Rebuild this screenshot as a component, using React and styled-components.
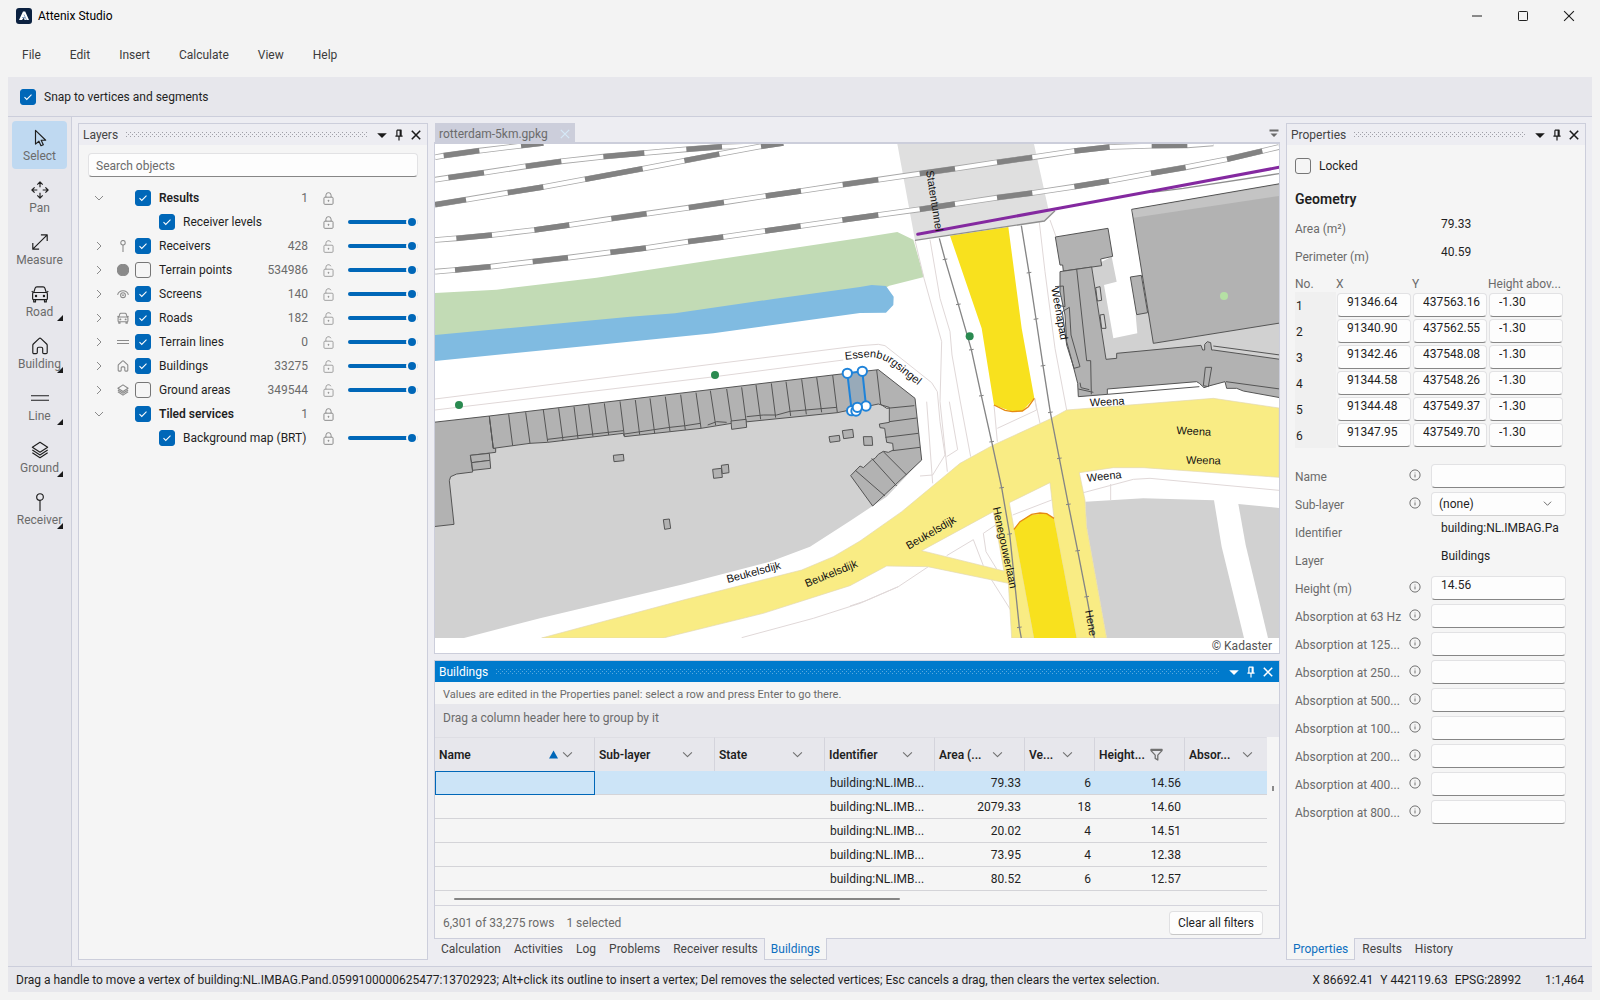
import React, { useState } from "react";
import styled, { createGlobalStyle, css } from "styled-components";

const colors = {
  window: "#f3f3f3",
  chrome: "#e7e7ec",
  workspace: "#ededf2",
  panel: "#f5f5f5",
  border: "#ccceDB",
  accent: "#0067b8",
  header: "#007acc",
  text: "#1f1f1f",
  muted: "#6b6b6b",
};

const GlobalStyle = createGlobalStyle`
  *, *::before, *::after {
    box-sizing: border-box;
  }
  body {
    margin: 0;
    background: ${colors.window};
    color: ${colors.text};
    font-family: Roboto, "Open Sans", sans-serif;
    font-size: 12px;
    line-height: 16px;
  }
  button, input, select {
    font: inherit;
    color: inherit;
    margin: 0;
  }
  button {
    background: none;
    border: 0;
    padding: 0;
  }
`;

/* ---------- icons ---------- */

const iconPaths = {
  select: <path d="M5 1.5v15.3l3.8-3.2 2.3 5 2.6-1.2-2.4-4.9h5z" />,
  pan: (
    <path d="M10 1v6M7 4l3-3 3 3M10 19v-6M7 16l3 3 3-3M1 10h6M4 7l-3 3 3 3M19 10h-6M16 7l3 3-3 3" />
  ),
  measure: <path d="M2 18 18 2M11 2h7v7M2 11v7h7" />,
  road: (
    <>
      <path d="M3 8.5 4.6 3.4A2 2 0 0 1 6.5 2h7a2 2 0 0 1 1.9 1.4L17 8.5M.8 7l2 1.5M19.2 7l-2 1.5" />
      <rect x="1.8" y="8.3" width="16.4" height="8" rx="1.4" />
      <path d="M3 16.5v2.3h2v-2.3M15 16.5v2.3h2v-2.3" />
      <circle cx="5.6" cy="12.3" r=".7" fill="currentColor" />
      <circle cx="14.4" cy="12.3" r=".7" fill="currentColor" />
    </>
  ),
  building: (
    <path d="M2 9.2c0-.6.2-1 .6-1.4l6.3-6a1.6 1.6 0 0 1 2.2 0l6.3 6c.4.4.6.8.6 1.4v8a1.3 1.3 0 0 1-1.3 1.3h-2.4a1.3 1.3 0 0 1-1.3-1.3V13a1.6 1.6 0 0 0-1.6-1.6H8.6A1.6 1.6 0 0 0 7 13v4.2a1.3 1.3 0 0 1-1.3 1.3H3.3A1.3 1.3 0 0 1 2 17.2z" />
  ),
  line: <path d="M0 7.5h20M0 12.5h20" />,
  ground: (
    <path d="M10 1.5 18.5 7 10 12.5 1.5 7zM1.5 10l8.5 5.5 8.5-5.5M1.5 13l8.5 5.5 8.5-5.5" />
  ),
  receiver: (
    <>
      <circle cx="10" cy="4.5" r="3.7" />
      <path d="M10 8.2V20" />
    </>
  ),
  point: <circle cx="10" cy="10" r="9.5" fill="currentColor" />,
  screen: (
    <>
      <path d="M1 11.5a9.3 9.3 0 0 1 18 0" />
      <circle cx="10" cy="12" r="4" />
      <circle cx="10" cy="12" r=".6" />
    </>
  ),
  right: <path d="m6 2 8 8-8 8" />,
  down: <path d="m2 6 8 8 8-8" />,
  lock: (
    <>
      <rect x="3" y="8" width="14" height="11" rx="1.5" />
      <path d="M6 8V5a4 4 0 0 1 8 0v3" />
      <circle cx="10" cy="13.5" r=".8" fill="currentColor" />
    </>
  ),
  unlock: (
    <>
      <rect x="3" y="8" width="14" height="11" rx="1.5" />
      <path d="M6 8V5a4 4 0 0 1 7.7-1.5" />
      <circle cx="10" cy="13.5" r=".8" fill="currentColor" />
    </>
  ),
  menu: <path d="M2 7h16l-8 8z" fill="currentColor" stroke="none" />,
  pin: (
    <path d="M6.5 2h7v10M6.5 2v10M12 2v10M4 12h12M10 12v7" strokeWidth="2" />
  ),
  close: <path d="m3 3 14 14M17 3 3 17" />,
  overflow: (
    <path d="M1 3h18v4H1zM3 11h14l-7 7z" fill="currentColor" stroke="none" />
  ),
  filter: <path d="M1.5 2h17v2L12 11v7.5L8 16v-5L1.5 4zM2 3.5h16" />,
  info: (
    <>
      <circle cx="10" cy="10" r="8.5" />
      <path d="M10 9v5M10 6v1.2" />
    </>
  ),
  minimize: <path d="M0 10h20" />,
  maximize: <rect x="1" y="1" width="18" height="18" rx="1.5" />,
  sortUp: <path d="M10 1 20 19H0z" fill="currentColor" stroke="none" />,
};

const IconSvg = styled.svg`
  display: block;
  flex: none;
  fill: none;
  stroke: currentColor;
  stroke-linejoin: round;
`;

const Icon = ({ name, size = 16, weight = 1.3 }) => (
  <IconSvg width={size} height={size} viewBox="0 0 20 20" strokeWidth={weight} aria-hidden="true">
    {iconPaths[name]}
  </IconSvg>
);

/* ---------- shared controls ---------- */

const tick =
  "url(\"data:image/svg+xml,%3Csvg xmlns='http://www.w3.org/2000/svg' viewBox='0 0 16 16'%3E%3Cpath d='m4 8.2 2.6 2.6L12 5.4' fill='none' stroke='white' stroke-width='1.2'/%3E%3C/svg%3E\")";

const CheckBox = styled.input.attrs({ type: "checkbox" })`
  appearance: none;
  flex: none;
  width: 16px;
  height: 16px;
  border: 1px solid #767676;
  border-radius: 3px;
  background: ${colors.panel};
  &:checked {
    border-color: ${colors.accent};
    background: ${colors.accent} ${tick};
  }
`;

const CheckLabel = styled.label`
  display: flex;
  align-items: center;
  gap: 8px;
`;

const fieldBox = css`
  width: 100%;
  height: 24px;
  border: 1px solid #e2e2e4;
  border-radius: 4px;
  background: #fdfdfd;
  color: ${colors.text};
  outline: none;
`;

const TextField = styled.input`
  ${fieldBox}
  border-bottom-color: #868686;
  padding: 0 0 7px 9px;
`;

const SearchField = styled(TextField)`
  padding: 1px 7px 0;
  &::placeholder {
    color: ${colors.muted};
    opacity: 1;
  }
`;

const SelectBox = styled.div`
  position: relative;
  color: #5c5c5c;
  svg {
    position: absolute;
    top: 7px;
    right: 14px;
    pointer-events: none;
  }
`;

const Select = styled.select`
  ${fieldBox}
  appearance: none;
  padding: 0 7px;
  border-bottom-color: #cfcfcf;
`;

/* ---------- window frame ---------- */

const Window = styled.div`
  display: flex;
  flex-direction: column;
  min-height: 100vh;
  padding: 0 8px 8px;
`;

const TitleBar = styled.header`
  display: flex;
  align-items: center;
  gap: 6px;
  height: 31px;
  padding-left: 8px;
`;

const AppName = styled.span`
  flex: 1;
  color: #000;
`;

const WindowButtons = styled.div`
  display: flex;
`;

const WindowButton = styled.button`
  display: grid;
  place-items: center;
  width: 46px;
  height: 30px;
`;

const MenuBar = styled.nav`
  display: flex;
  height: 46px;
`;

const MenuItem = styled.button`
  padding: 2px 15px 0 14px;
  color: #3b3b3b;
`;

const OptionsBar = styled.div`
  display: flex;
  align-items: center;
  height: 40px;
  padding-left: 12px;
  background: ${colors.chrome};
  border-bottom: 1px solid ${colors.border};
`;

const Body = styled.div`
  flex: 1;
  display: flex;
  min-height: 0;
  background: ${colors.workspace};
`;

const ToolRail = styled.div`
  display: flex;
  flex-direction: column;
  gap: 4px;
  width: 64px;
  padding: 4px;
  background: ${colors.chrome};
  border-right: 1px solid ${colors.border};
`;

const ToolButton = styled.button`
  position: relative;
  display: flex;
  flex-direction: column;
  align-items: center;
  gap: 1px;
  width: 55px;
  height: 48px;
  padding-top: 8px;
  border-radius: 4px;
  background: ${({ $active }) => ($active ? "#bfd9f1" : "transparent")};
  span {
    color: ${colors.muted};
  }
`;

// small corner mark on tools that open a flyout
const FlyoutMark = styled.i`
  position: absolute;
  right: 4px;
  bottom: 4px;
  border: 3px solid #1a1a1a;
  border-top-color: transparent;
  border-left-color: transparent;
`;

const Workspace = styled.main`
  flex: 1;
  display: flex;
  gap: 6px;
  min-width: 0;
  padding: 6px;
`;

const StatusBar = styled.footer`
  display: flex;
  align-items: center;
  gap: 24px;
  height: 26px;
  padding: 0 8px;
  background: ${colors.chrome};
  border-top: 1px solid ${colors.border};
  white-space: nowrap;
`;

const StatusText = styled.span`
  flex: 1;
`;

const Coordinates = styled.span`
  display: flex;
  gap: 7px;
`;

/* ---------- dock panels ---------- */

const Dock = styled.section`
  display: flex;
  flex-direction: column;
  flex: ${({ $width }) => ($width ? `0 0 ${$width}px` : "1")};
  min-width: 0;
`;

const Panel = styled.div`
  display: flex;
  flex-direction: column;
  flex: ${({ $fit }) => ($fit ? "none" : "1")};
  min-height: 0;
  background: ${colors.panel};
  border: 1px solid ${colors.border};
`;

const PanelHeader = styled.div`
  display: flex;
  align-items: center;
  gap: 8px;
  height: 21px;
  padding: 0 5px 0 4px;
  color: ${({ $active }) => ($active ? "#fff" : "#444")};
  background: ${({ $active }) => ($active ? colors.header : colors.workspace)};
  button {
    color: ${({ $active }) => ($active ? "#fff" : "#1a1a1a")};
  }
`;

const Grip = styled.div`
  flex: 1;
  height: 6px;
  --dot: ${({ $active }) => ($active ? "#59a8de" : "#a0a0a8")};
  background-image: radial-gradient(circle at 0.5px 0.5px, var(--dot) 0.6px, transparent 0.7px),
    radial-gradient(circle at 2.5px 2.5px, var(--dot) 0.6px, transparent 0.7px);
  background-size: 4px 4px;
`;

const HeaderButtons = styled.div`
  display: flex;
  gap: 5px;
`;

const PanelTitle = ({ title, active }) => (
  <PanelHeader $active={active}>
    <span>{title}</span>
    <Grip $active={active} />
    <HeaderButtons>
      <button aria-label={`${title} options`}><Icon name="menu" size={12} /></button>
      <button aria-label={`Pin ${title}`}><Icon name="pin" size={12} /></button>
      <button aria-label={`Close ${title}`}><Icon name="close" size={12} weight={2.6} /></button>
    </HeaderButtons>
  </PanelHeader>
);

const TabStrip = styled.div`
  display: flex;
  height: 21px;
`;

const Tab = styled.button`
  padding: 0 6px 1px 7px;
  white-space: nowrap;
  color: #444;
  ${({ $active }) =>
    $active &&
    css`
      margin-top: -1px;
      padding: 1px 6px 0;
      color: #0e70c0;
      background: ${colors.panel};
      border: 1px solid ${colors.border};
      border-top: 0;
    `}
`;

/* ---------- layers ---------- */

const LayerBody = styled.div`
  padding: 8px 9px;
`;

const LayerList = styled.ul`
  list-style: none;
  margin: 9px 0 0;
  padding: 0;
`;

const LayerRow = styled.li`
  display: grid;
  grid-template-columns: 22px 25px 1fr auto 40px 70px;
  align-items: center;
  height: 24px;
  color: #8a8a8a;
  svg {
    justify-self: center;
  }
`;

const LayerName = styled(CheckLabel)`
  padding-left: ${({ $child }) => ($child ? "24px" : "0")};
  color: ${colors.text};
  font-weight: ${({ $group }) => ($group ? 600 : 400)};
  white-space: nowrap;
`;

const Count = styled.span`
  color: ${colors.muted};
`;

const Slider = styled.input.attrs({ type: "range" })`
  appearance: none;
  width: 70px;
  height: 16px;
  background: none;
  &::-webkit-slider-runnable-track {
    height: 4px;
    border-radius: 2px;
    background: ${colors.accent};
  }
  &::-webkit-slider-thumb {
    appearance: none;
    width: 12px;
    height: 12px;
    margin-top: -4px;
    margin-right: -2px;
    border: 2px solid ${colors.panel};
    border-radius: 50%;
    background: ${colors.accent};
  }
`;

const layers = [
  { name: "Results", count: 1, group: true, locked: true },
  { name: "Receiver levels", child: true, locked: true },
  { name: "Receivers", icon: "receiver", count: 428 },
  { name: "Terrain points", icon: "point", count: 534986, hidden: true },
  { name: "Screens", icon: "screen", count: 140 },
  { name: "Roads", icon: "road", count: 182 },
  { name: "Terrain lines", icon: "line", count: 0 },
  { name: "Buildings", icon: "building", count: 33275 },
  { name: "Ground areas", icon: "ground", count: 349544, hidden: true },
  { name: "Tiled services", count: 1, group: true, locked: true },
  { name: "Background map (BRT)", child: true, locked: true },
];

const LayersPanel = () => (
  <Dock $width={350}>
    <Panel>
      <PanelTitle title="Layers" />
      <LayerBody>
        <SearchField type="text" placeholder="Search objects" aria-label="Search objects" />
        <LayerList>
          {layers.map((layer) => (
            <LayerRow key={layer.name}>
              {layer.child ? <span /> : <Icon name={layer.group ? "down" : "right"} size={10} weight={2} />}
              {layer.icon ? <Icon name={layer.icon} size={12} weight={1.8} /> : <span />}
              <LayerName $child={layer.child} $group={layer.group}>
                <CheckBox defaultChecked={!layer.hidden} />
                {layer.name}
              </LayerName>
              <Count>{layer.count}</Count>
              <Icon name={layer.locked ? "lock" : "unlock"} size={13} weight={layer.locked ? 1.5 : 1.2} />
              {!layer.group && <Slider defaultValue={100} aria-label={`${layer.name} opacity`} />}
            </LayerRow>
          ))}
        </LayerList>
      </LayerBody>
    </Panel>
  </Dock>
);

/* ---------- map ---------- */

const DocumentTabs = styled.div`
  display: flex;
  justify-content: space-between;
  align-items: center;
  height: 21px;
  padding-right: 1px;
  border-bottom: 2px solid ${colors.border};
  color: #6b6b6b;
`;

const DocumentTab = styled.div`
  display: flex;
  align-items: center;
  align-self: stretch;
  gap: 11px;
  margin-left: 1px;
  padding: 2px 4px 0;
  background: ${colors.border};
  button {
    color: #d5e9f8;
  }
`;

const MapFrame = styled.div`
  flex: 1;
  display: flex;
  flex-direction: column;
  min-height: 300px;
  margin-bottom: 6px;
  background: #fff;
  border: 1px solid ${colors.border};
  border-top: 0;
`;

const MapSvg = styled.svg`
  display: block;
  flex: 1 1 0;
  width: 100%;
  min-height: 0;
  text {
    font-family: "Liberation Sans", Arial, sans-serif;
    font-size: 33px;
    fill: #111;
  }
`;

const Attribution = styled.div`
  height: 15px;
  padding-right: 7px;
  line-height: 17px;
  text-align: right;
  color: #555;
`;

// each list alternates open and filled stretches of track
const rails = [
  { points: [[15, 127], [41, 122], [148, 107], [273, 92], [340, 84]] },
  { points: [[15, 194], [55, 188], [162, 173], [287, 154], [394, 139], [520, 125], [643, 114], [769, 103], [876, 95], [975, 92]] },
  { filled: true, points: [[15, 269], [108, 254], [233, 233], [340, 216], [465, 193], [638, 161], [763, 137], [868, 117], [993, 94], [1060, 84]] },
  { points: [[15, 375], [79, 370], [186, 360], [313, 345], [418, 330], [544, 311], [650, 296], [776, 278], [882, 262], [1007, 243], [1113, 228], [1238, 209], [1345, 194], [1469, 176], [1575, 161], [1701, 142], [1807, 127], [1933, 108], [2039, 96], [2165, 92], [2272, 91], [2350, 85]] },
  { points: [[15, 470], [75, 465], [182, 455], [308, 440], [414, 428], [541, 412], [648, 399], [774, 380], [880, 366], [1005, 348], [1112, 333], [1237, 315], [1345, 300], [1469, 283], [1575, 267], [1701, 248], [1807, 234], [1933, 215], [2037, 198], [2163, 175], [2267, 157], [2391, 133], [2497, 108], [2547, 96]] },
];

const Rail = ({ points, filled }) => {
  const line = points.map((p) => p.join(",")).join(" ");
  const blocks = points
    .slice(0, -1)
    .map((p, i) => ((i % 2 === 0) === Boolean(filled) ? `M${p}L${points[i + 1]}` : ""))
    .join("");
  return (
    <g fill="none">
      <polyline points={line} stroke="#a8a8a8" strokeWidth="17" />
      <polyline points={line} stroke="#fff" strokeWidth="12" />
      <path d={blocks} stroke="#828282" strokeWidth="16" />
    </g>
  );
};

// party walls of the terrace, top end then bottom end
const walls = [
  [178, 905, 190, 1000], [236, 898, 248, 992], [287, 892, 300, 985], [340, 885, 353, 980],
  [386, 880, 399, 977], [432, 875, 444, 971], [476, 869, 489, 965], [523, 865, 536, 960],
  [570, 859, 583, 963], [616, 855, 629, 959], [660, 850, 674, 955], [706, 845, 720, 949],
  [752, 839, 766, 945], [798, 833, 813, 939], [841, 827, 857, 931], [890, 822, 905, 923],
  [935, 817, 948, 917], [978, 810, 992, 913], [1024, 805, 1037, 908], [1068, 800, 1082, 903],
  [1115, 793, 1129, 898], [1160, 787, 1175, 892], [1208, 780, 1222, 893],
];

const sheds = [
  "550,1021 580,1018 582,1037 552,1040",
  "848,1063 874,1060 877,1087 851,1090",
  "874,1051 895,1048 897,1073 877,1076",
  "700,1214 718,1212 722,1240 704,1243",
  "1197,965 1228,961 1230,978 1200,982",
  "1237,947 1268,943 1271,967 1241,971",
  "1300,965 1326,965 1328,991 1302,991",
  "903,918 948,913 950,937 905,943",
  "121,1021 178,1015 180,1036 125,1043",
  "125,1043 180,1036 182,1060 128,1066",
];

const tramWest = [[1528, 370], [1545, 433], [1585, 568], [1624, 704], [1654, 842], [1685, 980], [1715, 1118], [1739, 1257], [1768, 1537], [1774, 1570]];
const tramEast = [[1774, 332], [1797, 473], [1818, 612], [1839, 752], [1861, 892], [1888, 1030], [1915, 1168], [1943, 1307], [1970, 1445], [1993, 1570]];

const Tram = ({ points }) => (
  <g fill="none" stroke="#858585">
    <polyline points={points.map((p) => p.join(",")).join(" ")} strokeWidth="4" />
    <path
      d={points.slice(1, -1).map(([x, y]) => `M${x - 7},${y + 1}L${x + 7},${y - 1}`).join("")}
      strokeWidth="3"
    />
  </g>
);

const outline = "1252,775 1297,769 1308,873 1282,877 1278,886 1265,887";
const handles = [[1252, 775], [1297, 769], [1265, 887], [1278, 888], [1308, 873], [1282, 877]];

const labels = [
  { text: "Statentunnel", x: 1488, y: 168, turn: 81 },
  { text: "Weenapad", x: 1864, y: 519, turn: 80 },
  { text: "Weena", x: 1980, y: 874, turn: -3 },
  { text: "Weena", x: 2239, y: 957, turn: 3 },
  { text: "Weena", x: 2268, y: 1046, turn: 1 },
  { text: "Weena", x: 1972, y: 1100, turn: -6 },
  { text: "Beukelsdijk", x: 893, y: 1404, turn: -15 },
  { text: "Beukelsdijk", x: 1130, y: 1417, turn: -22 },
  { text: "Beukelsdijk", x: 1436, y: 1304, turn: -30 },
  { text: "Henegouwerlaan", x: 1688, y: 1178, turn: 78 },
  { text: "Hene", x: 1965, y: 1487, turn: 80 },
];

const MapView = () => (
  <MapSvg viewBox="15 87 2532 1482" preserveAspectRatio="xMidYMid slice" role="img" aria-label="Map of rotterdam-5km.gpkg">
    <polygon points="1402,87 1812,87 1855,282 1875,287 1843,318 1455,376" fill="#dfdfdf" />
    {rails.map((rail, i) => (
      <Rail key={i} {...rail} />
    ))}
    <polygon points="15,534 200,524 500,488 850,435 1290,369 1402,351 1450,374 1482,486 1378,512 1290,560 15,670" fill="#c2dbb5" />
    <polygon points="15,660 600,605 735,595 1030,552 1290,516 1325,510 1368,513 1391,545 1390,570 1368,593 1290,594 850,655 500,690 15,738" fill="#80bbe1" />

    <g fill="none" stroke="#e0d8d8" strokeWidth="3">
      <path d="M15,852 1290,692 1345,688 1365,692 1505,803 1522,830 1530,920 1545,1020 1508,1080 1470,1083" />
      <path d="M15,885 855,785 1240,735M1455,376 1482,490 1535,680 1530,860 1552,1070" />
      <path d="M1500,374 1530,550 1560,650 1566,720 1590,855 1622,1025M1490,860 1508,1105M1550,1025 1583,1004 1558,860" />
      <path d="M1828,322 1845,470 1875,700 1910,885M1860,315 1878,365M1702,940 1820,885 1814,850 1830,925M1692,870 1702,980" />
      <path d="M1260,1473 1305,1458 1405,1415 1495,1355M935,1568 1150,1510 1290,1465 1405,1415" />
      <path d="M1960,1133 2110,1093 2160,1090 2547,1126M2042,1107V1155" />
      <path d="M1550,1322 1630,1274 1660,1352M1700,1228 1660,1255 1668,1310 1705,1370 1685,1395 1742,1485M1748,1200 1865,1155" />
    </g>

    {/* built-up blocks */}
    <g fill="#d1d1d1">
      <polygon points="15,922 1345,764 1455,850 1475,1035 1370,1145 1260,1218 1140,1295 1020,1340 760,1408 330,1510 102,1569 15,1569" />
      <polygon points="1985,455 2045,425 2060,500 2022,510 2050,670 2122,655 2117,600 2547,500 2547,760 2060,760 2028,735" />
      <polygon points="1966,1160 2140,1150 2352,1156 2375,1295 2442,1569 2030,1569 1970,1235" />
      <polygon points="2425,1167 2547,1179 2547,1569 2514,1569 2447,1290" />
    </g>

    {/* main roads */}
    <g fill="#f9ec84" stroke="#e3d8b4" strokeWidth="2">
      <polygon points="335,1569 760,1455 1115,1365 1210,1325 1290,1278 1415,1190 1590,1045 1690,990 1860,912 1910,885 2350,850 2547,879 2547,1087 2140,1058 2050,1058 1948,1073 1965,1155 1970,1235 2030,1569 1940,1569 1872,1210 1860,1103 1738,1163 1812,1569 1745,1569 1735,1405 1493,1355 1370,1353 1260,1412 1000,1495 700,1569" />
      <polygon points="1690,1190 1475,1307 1722,1368" fill="#fff" />
    </g>
    <path d="M1550,1322 1630,1274 1660,1352M1700,1228 1660,1255 1668,1310 1700,1362" fill="none" stroke="#e0d8d8" strokeWidth="3" />
    <g fill="#f8e11e">
      <polygon points="1560,362 1735,336 1775,640 1813,850 1777,888 1747,890 1692,870 1655,640" />
      <polygon points="1752,1243 1770,1220 1800,1200 1850,1195 1872,1210 1940,1569 1812,1569" />
    </g>
    <path d="M1692,870 1725,886 1747,890 1777,888 1795,875 1813,850M1752,1243 1770,1220 1805,1198 1830,1194 1850,1196 1872,1210" fill="none" stroke="#e58a12" strokeWidth="4" />

    {/* buildings */}
    <g fill="#b2b2b2" stroke="#555" strokeWidth="3">
      <polygon points="10,922 178,903 190,1000 197,1000 197,1012 121,1021 128,1071 80,1077 62,1085 58,1097 72,1228 10,1235" />
      <polygon points="178,903 1208,780 1345,764 1455,850 1475,1035 1328,1173 1262,1082 1290,1053 1300,1058 1325,1035 1335,1030 1345,1018 1360,1009 1375,1012 1390,1005 1388,985 1370,982 1364,940 1350,938 1348,927 1378,922 1378,877 1345,867 1222,893 905,925 813,940 583,965 580,955 353,982 300,985 190,1000" />
      {walls.map(([x1, y1, x2, y2]) => (
        <line key={x1} x1={x1} y1={y1} x2={x2} y2={y2} />
      ))}
      <path
        d="M353,973 444,962 580,947M583,957 720,937 766,932 811,925M833,930 860,920 890,922M950,905 1000,900 1040,900 1080,889 1220,877M1340,765 1352,868 1370,880 1453,872M1378,920 1460,909M1366,967 1465,955M1388,1007 1470,997M1360,1010 1430,1080M1325,1030 1400,1113M1275,1065 1365,1143"
        fill="none"
      />
      {sheds.map((points) => (
        <polygon key={points} points={points} />
      ))}
      <polygon points="2105,283 2550,206 2550,624 2170,685" />
      <polygon points="2101,486 2134,481 2153,593 2120,599" />
      <polygon points="1876,366 2034,340 2048,424 2012,432 2015,452 1900,468 1898,450 1890,450" />
      <polygon points="1890,470 1985,456 2028,733 2060,730 2060,715 2313,691 2318,705 2324,705 2324,688 2332,680 2342,683 2345,705 2350,705 2550,733 2550,848 2440,828 2420,820 2390,820 2385,800 2340,812 2322,818 2308,805 2300,800 2032,822 2032,838 1945,845 1943,805 1925,735 1910,680 1905,600 1890,530" />
      <path
        d="M1940,462 1970,737 1982,737 1984,838M1945,822 1990,832M1950,803 1953,818 1978,824M2032,838 2308,815M2350,693 2550,720M2388,800 2550,822M1997,518 2010,515 2015,556 2002,558zM2010,600 2022,598 2028,640 2015,640zM2326,757 2345,757 2335,815 2320,812zM1875,515 1900,513 1905,575 1880,570M1897,590 1918,577 1923,660 1950,755 1932,760 1910,690z"
        fill="none"
      />
    </g>
    <polygon points="2107,285 2547,209 2547,243 2112,308" fill="#c4c4c4" />

    <Tram points={tramWest} />
    <Tram points={tramEast} />
    <path d="M1455,376 1843,318 1875,287M2165,232 2260,220 2547,176" fill="none" stroke="#8f8f8f" strokeWidth="4" />
    <path d="M1463,358 1895,278 2180,226 2547,157" fill="none" stroke="#8429a0" strokeWidth="9" strokeLinecap="round" />

    {labels.map(({ text, x, y, turn }) => (
      <text key={`${x}-${y}`} transform={`translate(${x} ${y}) rotate(${turn})`}>{text}</text>
    ))}
    <path id="essenburgsingel" d="M1246,734 1300,728C1350,724 1368,736 1396,758L1480,824" fill="none" />
    <text>
      <textPath href="#essenburgsingel">Essenburgsingel</textPath>
    </text>

    <g fill="#2a8a50">
      <circle cx="87" cy="870" r="12" />
      <circle cx="855" cy="780" r="12" />
      <circle cx="1619" cy="664" r="12" />
      <circle cx="2382" cy="543" r="12" fill="#b5e0a4" />
    </g>
    <g stroke="#1f83d9" strokeWidth="6">
      <polygon points={outline} fill="#1f83d9" fillOpacity=".18" />
      {handles.map(([x, y]) => (
        <circle key={`${x}-${y}`} cx={x} cy={y} r="14" fill="#fff" strokeWidth="6" />
      ))}
    </g>
  </MapSvg>
);

/* ---------- buildings table ---------- */

const Note = styled.p`
  margin: 0;
  padding: 5px 8px 1px;
  font-size: 11px;
  color: ${colors.muted};
`;

const GroupArea = styled.div`
  height: 33px;
  padding: 6px 8px;
  background: ${colors.chrome};
  color: ${colors.muted};
`;

const GridArea = styled.div`
  display: flex;
  overflow: hidden;
`;

const DataTable = styled.table`
  flex: 1;
  width: 100%;
  min-width: 0;
  table-layout: fixed;
  border-collapse: separate;
  border-spacing: 0;
  white-space: nowrap;
`;

const HeadCell = styled.th`
  height: 34px;
  padding: 0 13px 0 4px;
  border-top: 1px solid #dedee4;
  border-right: 1px solid #d4d4dc;
  background: ${colors.chrome};
  font-weight: 600;
  text-align: left;
  &:last-child {
    border-right-color: ${colors.chrome};
  }
`;

const HeadContent = styled.div`
  display: flex;
  align-items: center;
  justify-content: space-between;
`;

const HeadIcons = styled.span`
  display: flex;
  align-items: center;
  gap: 4px;
  margin-right: ${({ $wide }) => ($wide ? "8px" : "0")};
  color: #707070;
  svg:first-child:not(:last-child) {
    color: ${colors.accent};
  }
`;

const DataRow = styled.tr`
  background: ${({ $selected }) => ($selected ? "#cce4f7" : "transparent")};
`;

const Cell = styled.td`
  height: 24px;
  padding: 0 4px 0 5px;
  border-bottom: 1px solid #d4d4d8;
  text-align: ${({ $number }) => ($number ? "right" : "left")};
  ${({ $focused }) => $focused && `border: 1px solid ${colors.accent};`}
`;

const ScrollGutter = styled.div`
  width: 12px;
  padding: 49px 0 0 5px;
`;

const ScrollMark = styled.div`
  width: 2px;
  height: 5px;
  background: #8a8a8a;
`;

const ScrollLane = styled.div`
  height: 14px;
  padding: 7px 0 0 19px;
`;

const ScrollThumb = styled.div`
  width: 54%;
  height: 2px;
  border-radius: 1px;
  background: #858585;
`;

const GridFooter = styled.div`
  display: flex;
  align-items: center;
  gap: 12px;
  height: 33px;
  padding: 1px 16px 0 8px;
  border-top: 1px solid #d4d4dc;
  color: ${colors.muted};
`;

const ClearButton = styled.button`
  height: 24px;
  margin-left: auto;
  padding: 0 8px;
  border: 1px solid #e0e0e2;
  border-bottom-color: #c8c8c8;
  border-radius: 4px;
  background: #fdfdfd;
  color: ${colors.text};
`;

const columns = [
  { name: "Name", width: 160, icon: "down", sorted: true, wide: true },
  { name: "Sub-layer", width: 120, icon: "down", wide: true },
  { name: "State", width: 110, icon: "down", wide: true },
  { name: "Identifier", width: 110, icon: "down", wide: true },
  { name: "Area (...", width: 90, icon: "down", wide: true },
  { name: "Ve...", width: 70, icon: "down", wide: true },
  { name: "Height...", width: 90, icon: "filter", wide: true },
  { name: "Absor...", icon: "down" },
];

const buildings = [
  ["79.33", "6", "14.56"],
  ["2079.33", "18", "14.60"],
  ["20.02", "4", "14.51"],
  ["73.95", "4", "12.38"],
  ["80.52", "6", "12.57"],
];

const bottomTabs = ["Calculation", "Activities", "Log", "Problems", "Receiver results", "Buildings"];

const BuildingsPanel = () => {
  const [tab, setTab] = useState("Buildings");

  return (
    <>
      <Panel $fit>
        <PanelTitle title="Buildings" active />
        <Note>Values are edited in the Properties panel: select a row and press Enter to go there.</Note>
        <GroupArea>Drag a column header here to group by it</GroupArea>
        <GridArea>
          <DataTable>
            <colgroup>
              {columns.map((column) => (
                <col key={column.name} width={column.width} />
              ))}
            </colgroup>
            <thead>
              <tr>
                {columns.map((column) => (
                  <HeadCell key={column.name}>
                    <HeadContent>
                      {column.name}
                      <HeadIcons $wide={column.wide}>
                        {column.sorted && <Icon name="sortUp" size={9} />}
                        <Icon name={column.icon} size={column.icon === "filter" ? 13 : 11} weight={2} />
                      </HeadIcons>
                    </HeadContent>
                  </HeadCell>
                ))}
              </tr>
            </thead>
            <tbody>
              {buildings.map(([area, vertices, height], i) => (
                <DataRow key={area} $selected={i === 0}>
                  <Cell $focused={i === 0} />
                  <Cell />
                  <Cell />
                  <Cell>building:NL.IMB...</Cell>
                  <Cell $number>{area}</Cell>
                  <Cell $number>{vertices}</Cell>
                  <Cell $number>{height}</Cell>
                  <Cell />
                </DataRow>
              ))}
            </tbody>
          </DataTable>
          <ScrollGutter>
            <ScrollMark />
          </ScrollGutter>
        </GridArea>
        <ScrollLane>
          <ScrollThumb />
        </ScrollLane>
        <GridFooter>
          <span>6,301 of 33,275 rows</span>
          <span>1 selected</span>
          <ClearButton>Clear all filters</ClearButton>
        </GridFooter>
      </Panel>
      <TabStrip>
        {bottomTabs.map((name) => (
          <Tab key={name} $active={name === tab} onClick={() => setTab(name)}>{name}</Tab>
        ))}
      </TabStrip>
    </>
  );
};

/* ---------- properties ---------- */

const PropertiesBody = styled.div`
  padding: 13px 19px 12px 8px;
`;

const SectionTitle = styled.h2`
  margin: 15px 0 5px;
  font-size: 14px;
  line-height: 20px;
  font-weight: 600;
`;

const PropertyRow = styled.div`
  display: grid;
  grid-template-columns: 108px 28px 1fr;
  height: 28px;
  padding-top: 2px;
  white-space: nowrap;
  color: ${colors.muted};
  label, > span {
    padding-top: 5px;
  }
  > svg {
    margin: 5px 0 0 6px;
  }
`;

const Value = styled.output`
  grid-column: 3;
  padding-left: 10px;
  color: ${colors.text};
`;

const VertexTable = styled.table`
  width: 269px;
  margin-bottom: 14px;
  table-layout: fixed;
  border-collapse: separate;
  border-spacing: 0;
  th {
    height: 22px;
    padding: 6px 0 0;
    font-weight: 400;
    text-align: left;
    line-height: 16px;
    white-space: nowrap;
    color: ${colors.muted};
  }
  td {
    height: 26px;
    padding: 1px;
    vertical-align: top;
  }
  td:first-child {
    padding-top: 6px;
    background: #f0f0f0;
  }
`;

const vertices = [
  ["91346.64", "437563.16"],
  ["91340.90", "437562.55"],
  ["91342.46", "437548.08"],
  ["91344.58", "437548.26"],
  ["91344.48", "437549.37"],
  ["91347.95", "437549.70"],
];

const properties = [
  { name: "Name", value: "" },
  { name: "Sub-layer", options: ["(none)"] },
  { name: "Identifier", text: "building:NL.IMBAG.Pa" },
  { name: "Layer", text: "Buildings" },
  { name: "Height (m)", value: "14.56" },
  { name: "Absorption at 63 Hz", value: "" },
  { name: "Absorption at 125...", value: "" },
  { name: "Absorption at 250...", value: "" },
  { name: "Absorption at 500...", value: "" },
  { name: "Absorption at 100...", value: "" },
  { name: "Absorption at 200...", value: "" },
  { name: "Absorption at 400...", value: "" },
  { name: "Absorption at 800...", value: "" },
];

const Property = ({ name, text, value, options, id }) => {
  if (text) {
    return (
      <PropertyRow>
        <span>{name}</span>
        <Value>{text}</Value>
      </PropertyRow>
    );
  }
  return (
    <PropertyRow>
      <label htmlFor={id}>{name}</label>
      <Icon name="info" size={12} weight={1.6} />
      {options ? (
        <SelectBox>
          <Select id={id}>
            {options.map((option) => (
              <option key={option}>{option}</option>
            ))}
          </Select>
          <Icon name="down" size={9} weight={2} />
        </SelectBox>
      ) : (
        <TextField id={id} type="text" defaultValue={value} />
      )}
    </PropertyRow>
  );
};

const PropertiesPanel = () => {
  const [tab, setTab] = useState("Properties");

  return (
    <Dock $width={300}>
      <Panel>
        <PanelTitle title="Properties" />
        <PropertiesBody>
          <CheckLabel>
            <CheckBox />
            Locked
          </CheckLabel>
          <SectionTitle>Geometry</SectionTitle>
          <Property name="Area (m²)" text="79.33" />
          <Property name="Perimeter (m)" text="40.59" />
          <VertexTable>
            <colgroup>
              <col width="41" />
              <col width="76" />
              <col width="76" />
              <col width="76" />
            </colgroup>
            <thead>
              <tr>
                <th>No.</th>
                <th>X</th>
                <th>Y</th>
                <th>Height abov...</th>
              </tr>
            </thead>
            <tbody>
              {vertices.map(([x, y], i) => (
                <tr key={x}>
                  <td>{i + 1}</td>
                  <td><TextField type="text" defaultValue={x} aria-label={`X of vertex ${i + 1}`} /></td>
                  <td><TextField type="text" defaultValue={y} aria-label={`Y of vertex ${i + 1}`} /></td>
                  <td><TextField type="text" defaultValue="-1.30" aria-label={`Height of vertex ${i + 1}`} /></td>
                </tr>
              ))}
            </tbody>
          </VertexTable>
          {properties.map((property, i) => (
            <Property key={property.name} id={`property-${i}`} {...property} />
          ))}
        </PropertiesBody>
      </Panel>
      <TabStrip>
        {["Properties", "Results", "History"].map((name) => (
          <Tab key={name} $active={name === tab} onClick={() => setTab(name)}>{name}</Tab>
        ))}
      </TabStrip>
    </Dock>
  );
};

/* ---------- app ---------- */

const tools = [
  { name: "Select", icon: "select" },
  { name: "Pan", icon: "pan" },
  { name: "Measure", icon: "measure" },
  { name: "Road", icon: "road", flyout: true },
  { name: "Building", icon: "building", flyout: true },
  { name: "Line", icon: "line", flyout: true },
  { name: "Ground", icon: "ground", flyout: true },
  { name: "Receiver", icon: "receiver", flyout: true },
];

const Logo = () => (
  <svg width="16" height="16" viewBox="0 0 16 16" aria-hidden="true">
    <rect width="16" height="16" rx="3" fill="#0b2140" />
    <path d="M7 3.5h2.2L13 12H8.5L8 9.5 6 12H3z" fill="#fff" />
    <path d="m8 6.5 2.5 5.5M6 9.5h3" stroke="#6d8fb8" strokeWidth=".8" />
  </svg>
);

const App = () => {
  const [tool, setTool] = useState("Select");

  return (
    <>
      <GlobalStyle />
      <Window>
        <TitleBar>
          <Logo />
          <AppName>Attenix Studio</AppName>
          <WindowButtons>
            <WindowButton aria-label="Minimize"><Icon name="minimize" size={10} weight={2} /></WindowButton>
            <WindowButton aria-label="Maximize"><Icon name="maximize" size={10} weight={2} /></WindowButton>
            <WindowButton aria-label="Close"><Icon name="close" size={14} weight={1.6} /></WindowButton>
          </WindowButtons>
        </TitleBar>
        <MenuBar>
          {["File", "Edit", "Insert", "Calculate", "View", "Help"].map((name) => (
            <MenuItem key={name}>{name}</MenuItem>
          ))}
        </MenuBar>
        <OptionsBar>
          <CheckLabel>
            <CheckBox defaultChecked />
            Snap to vertices and segments
          </CheckLabel>
        </OptionsBar>
        <Body>
          <ToolRail>
            {tools.map(({ name, icon, flyout }) => (
              <ToolButton key={name} $active={name === tool} onClick={() => setTool(name)}>
                <Icon name={icon} size={18} />
                <span>{name}</span>
                {flyout && <FlyoutMark />}
              </ToolButton>
            ))}
          </ToolRail>
          <Workspace>
            <LayersPanel />
            <Dock>
              <DocumentTabs>
                <DocumentTab>
                  rotterdam-5km.gpkg
                  <button aria-label="Close document"><Icon name="close" size={12} weight={2} /></button>
                </DocumentTab>
                <button aria-label="Open documents"><Icon name="overflow" size={10} /></button>
              </DocumentTabs>
              <MapFrame>
                <MapView />
                <Attribution>© Kadaster</Attribution>
              </MapFrame>
              <BuildingsPanel />
            </Dock>
            <PropertiesPanel />
          </Workspace>
        </Body>
        <StatusBar>
          <StatusText>
            Drag a handle to move a vertex of building:NL.IMBAG.Pand.0599100000625477:13702923; Alt+click its outline to
            insert a vertex; Del removes the selected vertices; Esc cancels a drag, then clears the vertex selection.
          </StatusText>
          <Coordinates>
            <span>X 86692.41</span>
            <span>Y 442119.63</span>
            <span>EPSG:28992</span>
          </Coordinates>
          <span>1:1,464</span>
        </StatusBar>
      </Window>
    </>
  );
};

export default App;
